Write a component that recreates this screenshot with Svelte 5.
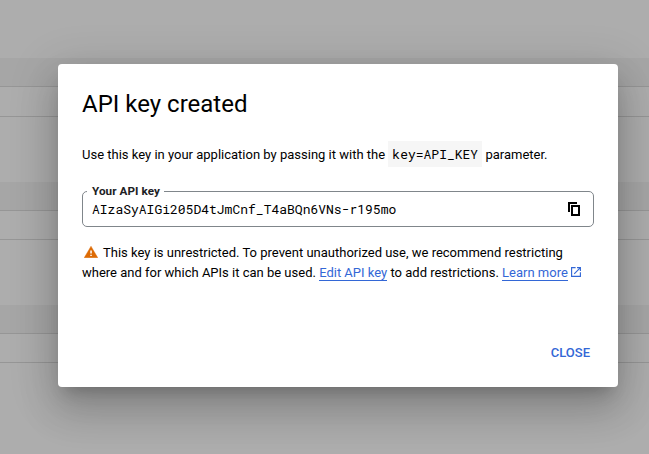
<script>
  const apiKey = 'AIzaSyAIGi205D4tJmCnf_T4aBQn6VNs-r195mo';
  const tables = [0, 1, 2];
</script>

<div class="page">
  <div class="background">
    {#each tables as t}
      <div class="table t{t}">
        <div class="head"></div>
        <div class="row"></div>
      </div>
    {/each}
  </div>

  <div class="dialog" role="dialog" aria-labelledby="title">
    <h1 id="title">API key created</h1>
    <p class="intro">Use this key in your application by passing it with the <code>key=API_KEY</code> parameter.</p>

    <fieldset class="field">
      <legend>Your API key</legend>
      <span class="value">{apiKey}</span>
      <button class="copy" aria-label="Copy">
        <svg width="12" height="14" viewBox="0 0 12 14" fill="none" stroke="#000" stroke-width="2">
          <path d="M1 10V1H9" />
          <path d="M4 4H11V13H4Z" />
        </svg>
      </button>
    </fieldset>

    <p class="note">
      <svg class="warn" width="14" height="12" viewBox="0 0 14 12">
        <path d="M7 .2 13.8 11.8H.2Z" fill="#dd6b05" stroke="#dd6b05" stroke-width=".4" stroke-linejoin="round" />
        <path d="M6.3 4.5h1.5v3.1H6.3zM6.3 8.7h1.5v1.4H6.3z" fill="#fff" />
      </svg><span>This key is unrestricted. To prevent unauthorized use, we recommend restricting</span><br />
      where and for which APIs it can be used. <a href="#edit">Edit API key</a> to add restrictions. <a href="#learn">Learn more</a><svg class="ext" width="10" height="10" viewBox="0 0 10 10" fill="none" stroke="#3367d6" stroke-width="1.15">
        <path d="M4.6 .6H.6V9.4H9.4V5.3M6 .6H9.4V4M9.4 .6 3.2 6.8" />
      </svg>
    </p>

    <div class="actions"><button class="close">CLOSE</button></div>
  </div>
</div>

<style>
  .page {
    display: flex;
    align-items: flex-start;
    width: 649px;
    height: 454px;
    position: relative;
    overflow: hidden;
    background: #adadad;
    font: 13px/20px Roboto, sans-serif;
    color: #000;
  }
  .background {
    position: absolute;
    inset: 0;
    padding-top: 58px;
  }
  .table { height: 124px; }
  .t1 { height: 123px; }
  .head {
    height: 28px;
    background: #a6a6a6;
    border-bottom: 1px solid #969696;
  }
  .row {
    height: 29px;
    border-bottom: 1px solid #969696;
  }
  .t1 .row, .t2 .row { height: 28px; }
  .dialog {
    position: relative;
    box-sizing: border-box;
    width: 560px;
    height: 323px;
    margin: 64px 0 0 58px;
    padding: 24px;
    display: flex;
    flex-direction: column;
    background: #fff;
    border-radius: 4px;
    box-shadow: 0 11px 15px -7px rgba(0, 0, 0, 0.2), 0 24px 38px 3px rgba(0, 0, 0, 0.14), 0 9px 46px 8px rgba(0, 0, 0, 0.12);
  }
  h1 {
    margin: 0;
    font-size: 24px;
    line-height: 32px;
    font-weight: 400;
  }
  p { margin: 0; white-space: nowrap; }
  .intro { margin-top: 21px; }
  code {
    display: inline-block;
    padding: 3px 4px;
    background: #f6f6f6;
    font: 13px/20px "Roboto Mono", "DejaVu Sans Mono", monospace;
  }
  .field {
    box-sizing: border-box;
    display: flex;
    align-items: center;
    justify-content: space-between;
    height: 44px;
    margin: 16px 0 0;
    padding: 0 13px 0 9px;
    min-width: 0;
    border: 1px solid #80868b;
    border-radius: 5px;
  }
  legend {
    margin-left: -5px;
    padding: 0 4px 0 5px;
    font-size: 11.7px;
    line-height: 16px;
    font-weight: 700;
    letter-spacing: 0.06px;
    color: #202124;
    transform: translateY(-0.5px);
  }
  .value { font: 13px/20px "Roboto Mono", "DejaVu Sans Mono", monospace; }
  button { border: 0; padding: 0; background: none; font: inherit; }
  .copy { display: flex; }
  .note { margin-top: 16px; }
  .warn { margin: 0 5px -1px 2px; }
  a {
    color: #3367d6;
    text-decoration: none;
    border-bottom: 1px solid #3367d6;
  }
  .ext { margin-left: 3px; }
  .actions {
    margin-top: auto;
    display: flex;
    justify-content: flex-end;
    padding-right: 4px;
  }
  .close {
    color: #3367d6;
    font-weight: 500;
    line-height: 20px;
  }
</style>
